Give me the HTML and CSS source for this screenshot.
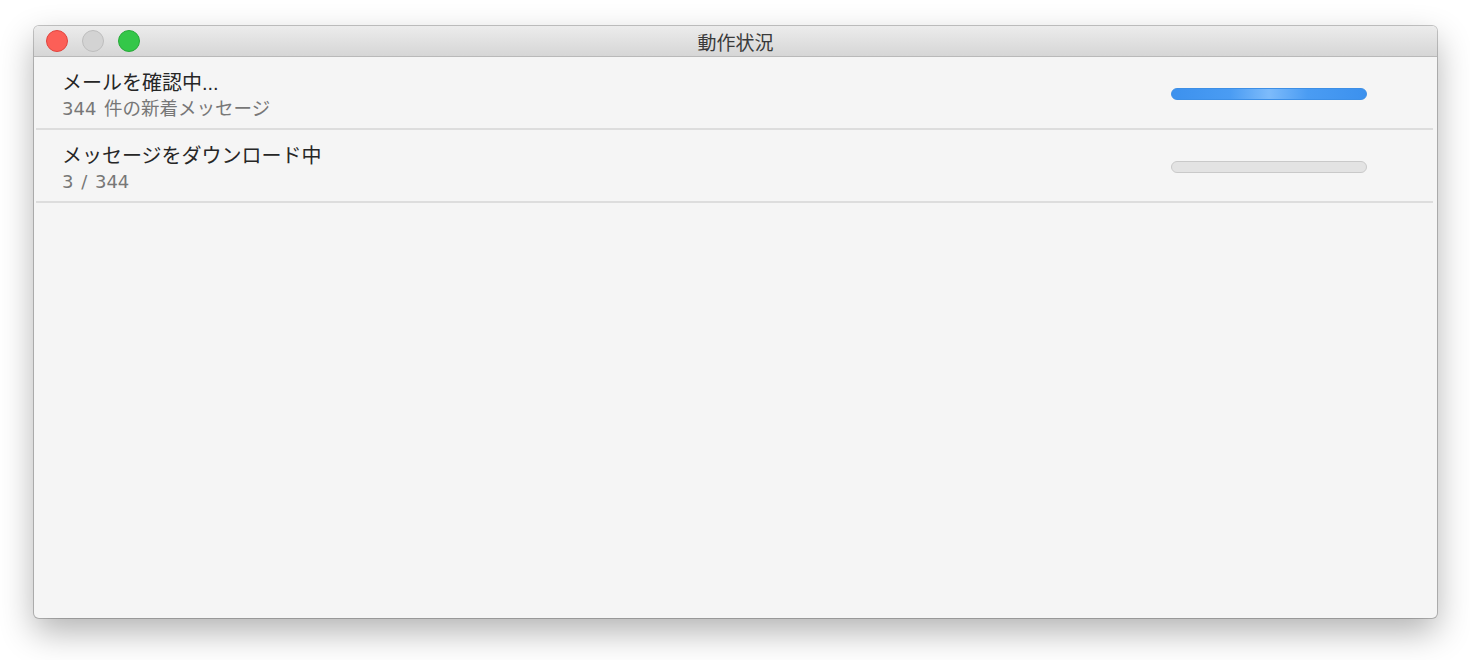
FILE: index.html
```html
<!DOCTYPE html>
<html lang="ja">
<head>
<meta charset="utf-8">
<title>動作状況</title>
<link rel="stylesheet" href="styles.css">
</head>
<body>
<div class="window">
  <div class="titlebar">
    <div class="lights">
      <span class="light red"></span>
      <span class="light gray"></span>
      <span class="light green"></span>
    </div>
    <div class="title">動作状況</div>
  </div>
  <div class="list">
    <div class="row">
      <div class="texts">
        <div class="main">メールを確認中...</div>
        <div class="sub"><span class="num">344 </span>件の新着メッセージ</div>
      </div>
      <div class="bar bar-active"></div>
    </div>
    <div class="row">
      <div class="texts">
        <div class="main">メッセージをダウンロード中</div>
        <div class="sub"><span class="num">3 / 344</span></div>
      </div>
      <div class="bar bar-idle"></div>
    </div>
  </div>
</div>
</body>
</html>
```
FILE: styles.css
```css
html, body {
  margin: 0;
  padding: 0;
  background: #ffffff;
}
body {
  width: 1470px;
  height: 660px;
  overflow: hidden;
  font-family: "Liberation Sans", "Noto Sans CJK JP", sans-serif;
}
.window {
  margin: 26px 0 0 34px;
  width: 1403px;
  height: 592px;
  box-sizing: border-box;
  border-radius: 5px;
  background: #f5f5f5;
  box-shadow: 0 0 0 1px rgba(0,0,0,0.22), 0 14px 34px rgba(0,0,0,0.30);
  display: flex;
  flex-direction: column;
  overflow: hidden;
}
.titlebar {
  height: 31px;
  box-sizing: border-box;
  border-bottom: 1px solid #b9b9b9;
  background: linear-gradient(to bottom, #ececec, #d6d6d6);
  display: flex;
  align-items: center;
  position: relative;
}
.lights {
  display: flex;
  gap: 14px;
  padding-left: 12px;
}
.light {
  width: 22px;
  height: 22px;
  box-sizing: border-box;
  border-radius: 50%;
}
.red { background: #fc5f57; border: 1px solid #e0443e; }
.gray { background: #d3d3d3; border: 1px solid #bdbdbd; }
.green { background: #34c749; border: 1px solid #28a93a; }
.title {
  position: absolute;
  left: 0;
  right: 0;
  top: 0;
  bottom: 0;
  display: flex;
  align-items: center;
  justify-content: center;
  font-size: 19px;
  color: #3a3a3a;
  pointer-events: none;
}
.list {
  display: flex;
  flex-direction: column;
}
.row {
  margin: 0 4px 0 2px;
  height: 73px;
  box-sizing: border-box;
  border-bottom: 2px solid #dddddd;
  padding: 14px 66px 0 26px;
  display: flex;
  justify-content: space-between;
  align-items: flex-start;
}
.main {
  font-size: 20px;
  line-height: 25px;
  color: #262626;
}
.sub {
  font-size: 18.5px;
  line-height: 25px;
  color: #777777;
}
.num {
  font-family: "DejaVu Sans", sans-serif;
  font-size: 18px;
  word-spacing: 2px;
}
.bar {
  width: 196px;
  height: 12px;
  box-sizing: border-box;
  border-radius: 6px;
  margin-top: 17px;
}
.bar-active {
  border: 1px solid #3d8fe6;
  background: linear-gradient(to right, #3c91ee 0%, #4a9cf3 30%, #7dbbfb 50%, #4a9cf3 70%, #3c91ee 100%);
}
.bar-idle {
  border: 1px solid #c9c9c9;
  background: #e3e3e3;
}
```
